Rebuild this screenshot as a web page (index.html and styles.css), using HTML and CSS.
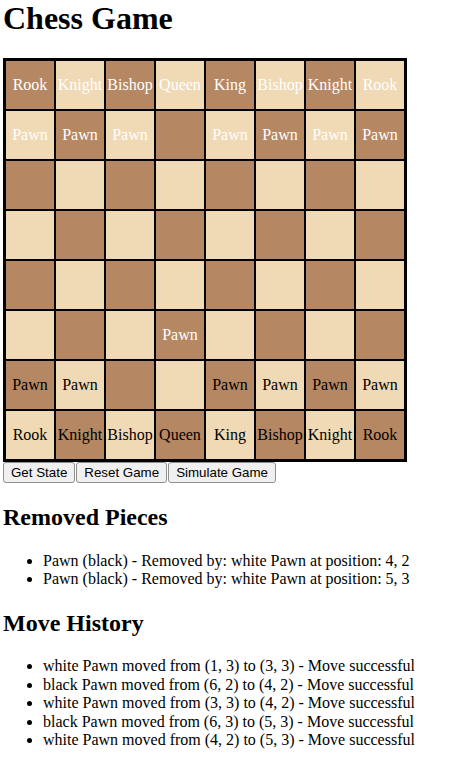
FILE: index.html
```html
<!DOCTYPE html>
<html>
<head>
  <title>Chess Game</title>
  <link rel="stylesheet" href="styles.css">
</head>
<body>
  <div class="container">
    <h1>Chess Game</h1>
    <div id="board" class="board">
      <div class="cell dark white-piece">Rook</div>
      <div class="cell light white-piece">Knight</div>
      <div class="cell dark white-piece">Bishop</div>
      <div class="cell light white-piece">Queen</div>
      <div class="cell dark white-piece">King</div>
      <div class="cell light white-piece">Bishop</div>
      <div class="cell dark white-piece">Knight</div>
      <div class="cell light white-piece">Rook</div>

      <div class="cell light white-piece">Pawn</div>
      <div class="cell dark white-piece">Pawn</div>
      <div class="cell light white-piece">Pawn</div>
      <div class="cell dark"></div>
      <div class="cell light white-piece">Pawn</div>
      <div class="cell dark white-piece">Pawn</div>
      <div class="cell light white-piece">Pawn</div>
      <div class="cell dark white-piece">Pawn</div>

      <div class="cell dark"></div>
      <div class="cell light"></div>
      <div class="cell dark"></div>
      <div class="cell light"></div>
      <div class="cell dark"></div>
      <div class="cell light"></div>
      <div class="cell dark"></div>
      <div class="cell light"></div>

      <div class="cell light"></div>
      <div class="cell dark"></div>
      <div class="cell light"></div>
      <div class="cell dark"></div>
      <div class="cell light"></div>
      <div class="cell dark"></div>
      <div class="cell light"></div>
      <div class="cell dark"></div>

      <div class="cell dark"></div>
      <div class="cell light"></div>
      <div class="cell dark"></div>
      <div class="cell light"></div>
      <div class="cell dark"></div>
      <div class="cell light"></div>
      <div class="cell dark"></div>
      <div class="cell light"></div>

      <div class="cell light"></div>
      <div class="cell dark"></div>
      <div class="cell light"></div>
      <div class="cell dark white-piece">Pawn</div>
      <div class="cell light"></div>
      <div class="cell dark"></div>
      <div class="cell light"></div>
      <div class="cell dark"></div>

      <div class="cell dark black-piece">Pawn</div>
      <div class="cell light black-piece">Pawn</div>
      <div class="cell dark"></div>
      <div class="cell light"></div>
      <div class="cell dark black-piece">Pawn</div>
      <div class="cell light black-piece">Pawn</div>
      <div class="cell dark black-piece">Pawn</div>
      <div class="cell light black-piece">Pawn</div>

      <div class="cell light black-piece">Rook</div>
      <div class="cell dark black-piece">Knight</div>
      <div class="cell light black-piece">Bishop</div>
      <div class="cell dark black-piece">Queen</div>
      <div class="cell light black-piece">King</div>
      <div class="cell dark black-piece">Bishop</div>
      <div class="cell light black-piece">Knight</div>
      <div class="cell dark black-piece">Rook</div>
    </div>
    <div class="controls">
      <button type="button" id="getState">Get State</button>
      <button type="button" id="resetGame">Reset Game</button>
      <button type="button" id="simulateGame">Simulate Game</button>
    </div>

    <h2>Removed Pieces</h2>
    <ul id="removedPieces">
      <li>Pawn (black) - Removed by: white Pawn at position: 4, 2</li>
      <li>Pawn (black) - Removed by: white Pawn at position: 5, 3</li>
    </ul>

    <h2>Move History</h2>
    <ul id="moveHistory">
      <li>white Pawn moved from (1, 3) to (3, 3) - Move successful</li>
      <li>black Pawn moved from (6, 2) to (4, 2) - Move successful</li>
      <li>white Pawn moved from (3, 3) to (4, 2) - Move successful</li>
      <li>black Pawn moved from (6, 3) to (5, 3) - Move successful</li>
      <li>white Pawn moved from (4, 2) to (5, 3) - Move successful</li>
    </ul>
  </div>
</body>
</html>
```

FILE: styles.css
```css
body {
  margin: 0;
  font-family: "Liberation Serif", "Times New Roman", serif;
  color: #000;
  background-color: #fff;
}

.container {
  padding: 0 3px;
}

h1 {
  font-size: 32px;
  line-height: 1.15;
  margin: 0 0 21px;
}

h2 {
  font-size: 24px;
  line-height: 1.2;
  margin: 20px 0;
}

ul {
  font-size: 16px;
  line-height: 1.15;
  padding-left: 40px;
}

li {
  line-height: 18.5px;
}

.board {
  display: grid;
  grid-template-columns: repeat(8, 50px);
  grid-auto-rows: 50px;
  width: 400px;
  border: 2px solid #000;
}

.cell {
  display: flex;
  align-items: center;
  justify-content: center;
  border: 1px solid #000;
  font-size: 16px;
  white-space: nowrap;
}

.dark {
  background-color: #b58863;
}

.light {
  background-color: #f0d9b5;
}

.white-piece {
  color: #fff;
}

.black-piece {
  color: #000;
}

.controls {
  display: flex;
  gap: 1px;
}

.controls button {
  font-family: "Liberation Sans", Arial, sans-serif;
  font-size: 13.33px;
  padding: 1px 7px;
  height: 21px;
  background-color: #f0f0f0;
  border: 1px solid #8f8f8f;
  border-radius: 3px;
  color: #000;
}
```
